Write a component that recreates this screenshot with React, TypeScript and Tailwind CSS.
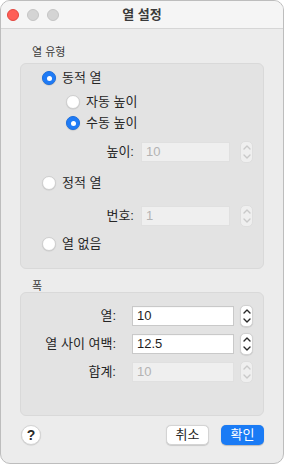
import React from "react";

const FONT = { fontFamily: '"Liberation Sans", "Noto Sans CJK KR", sans-serif' };

function Radio({ checked }: { checked: boolean }) {
  if (checked) {
    return (
      <span className="w-[14px] h-[14px] rounded-full bg-[#1f7bf6] border border-[#1a6fe0] flex items-center justify-center shrink-0 shadow-[0_0.5px_1px_rgba(0,0,0,0.2)]">
        <span className="w-[5px] h-[5px] rounded-full bg-white" />
      </span>
    );
  }
  return (
    <span className="w-[14px] h-[14px] rounded-full bg-white border border-[#cfcfcf] shrink-0 shadow-[0_0.5px_1px_rgba(0,0,0,0.12)]" />
  );
}

function Stepper({ disabled }: { disabled?: boolean }) {
  const c = disabled ? "#c9c9c9" : "#2a2a2a";
  return (
    <span
      className={
        "w-[13px] h-[22px] rounded-[5px] flex flex-col items-center justify-between py-[3px] shrink-0 " +
        (disabled
          ? "bg-[#efefef] border border-[#dedede]"
          : "bg-white border border-[#d2d2d2] shadow-[0_0.5px_1px_rgba(0,0,0,0.15)]")
      }
    >
      <svg width="8" height="5" viewBox="0 0 8 5">
        <path d="M1 4 L4 1 L7 4" fill="none" stroke={c} strokeWidth="1.4" strokeLinecap="round" strokeLinejoin="round" />
      </svg>
      <svg width="8" height="5" viewBox="0 0 8 5">
        <path d="M1 1 L4 4 L7 1" fill="none" stroke={c} strokeWidth="1.4" strokeLinecap="round" strokeLinejoin="round" />
      </svg>
    </span>
  );
}

function Field({ value, disabled, w }: { value: string; disabled?: boolean; w: string }) {
  return (
    <div
      className={
        "h-[20px] flex items-center px-[4px] text-[13px] border " +
        w +
        " " +
        (disabled
          ? "bg-[#efefef] border-[#e0e0e0] text-[#b3b3b3]"
          : "bg-white border-[#c9c9c9] text-[#1e1e1e] shadow-[inset_0_0.5px_0_rgba(0,0,0,0.05)]")
      }
    >
      {value}
    </div>
  );
}

export default function App() {
  return (
    <div className="w-[284px] h-[464px] bg-white" style={FONT}>
      <div className="w-[284px] h-[464px] rounded-[10px] border border-[#bdbdbd] bg-[#ececec] overflow-hidden flex flex-col">
        {/* Title bar */}
        <div className="h-[28px] bg-[#f5f5f5] border-b border-[#d6d6d6] flex items-center relative shrink-0">
          <div className="flex items-center gap-[8px] pl-[6px]">
            <span className="w-[12px] h-[12px] rounded-full bg-[#fe5f57] border border-[#e2463f]" />
            <span className="w-[12px] h-[12px] rounded-full bg-[#d4d4d4] border border-[#c4c4c4]" />
            <span className="w-[12px] h-[12px] rounded-full bg-[#d4d4d4] border border-[#c4c4c4]" />
          </div>
          <div className="absolute inset-0 flex items-center justify-center text-[13px] font-bold text-[#3a3a3a]">
            열 설정
          </div>
        </div>

        <div className="flex flex-col px-[19px]">
          {/* Section 1 label */}
          <div className="text-[11px] text-[#3a3a3a] mt-[17px] pl-[12px] leading-[13px]">열 유형</div>
          <div className="mt-[4px] h-[206px] rounded-[6px] bg-[#e3e3e3] border border-[#d9d9d9] flex flex-col pl-[21px] text-[13px] text-[#262626]">
            <div className="h-[20px] mt-[4px] flex items-center gap-[6px]">
              <Radio checked />
              <span>동적 열</span>
            </div>
            <div className="h-[20px] mt-[4px] flex items-center gap-[6px] pl-[24px]">
              <Radio checked={false} />
              <span>자동 높이</span>
            </div>
            <div className="h-[20px] mt-[1px] flex items-center gap-[6px] pl-[24px]">
              <Radio checked />
              <span>수동 높이</span>
            </div>
            <div className="h-[20px] mt-[9px] flex items-center">
              <span className="w-[92px] text-right">높이:</span>
              <span className="w-[7px]" />
              <Field value="10" disabled w="w-[89px]" />
              <span className="w-[10px]" />
              <Stepper disabled />
            </div>
            <div className="h-[20px] mt-[11px] flex items-center gap-[6px]">
              <Radio checked={false} />
              <span>정적 열</span>
            </div>
            <div className="h-[20px] mt-[13px] flex items-center">
              <span className="w-[92px] text-right">번호:</span>
              <span className="w-[7px]" />
              <Field value="1" disabled w="w-[89px]" />
              <span className="w-[10px]" />
              <Stepper disabled />
            </div>
            <div className="h-[20px] mt-[8px] flex items-center gap-[6px]">
              <Radio checked={false} />
              <span>열 없음</span>
            </div>
          </div>

          {/* Section 2 label */}
          <div className="text-[11px] text-[#3a3a3a] mt-[11px] pl-[12px] leading-[12px]">폭</div>
          <div className="mt-[0px] h-[124px] rounded-[6px] bg-[#e3e3e3] border border-[#d9d9d9] flex flex-col pt-[13px] text-[13px] text-[#262626]">
            <div className="h-[20px] flex items-center">
              <span className="w-[95px] text-right">열:</span>
              <span className="w-[16px]" />
              <Field value="10" w="w-[102px]" />
              <span className="w-[6px]" />
              <Stepper />
            </div>
            <div className="h-[20px] mt-[8px] flex items-center">
              <span className="w-[95px] text-right">열 사이 여백:</span>
              <span className="w-[16px]" />
              <Field value="12.5" w="w-[102px]" />
              <span className="w-[6px]" />
              <Stepper />
            </div>
            <div className="h-[20px] mt-[8px] flex items-center">
              <span className="w-[95px] text-right">합계:</span>
              <span className="w-[16px]" />
              <Field value="10" disabled w="w-[102px]" />
              <span className="w-[6px]" />
              <Stepper disabled />
            </div>
          </div>

          {/* Buttons */}
          <div className="mt-[8px] h-[22px] flex items-center">
            <span className="w-[20px] h-[20px] rounded-full bg-white border border-[#d4d4d4] shadow-[0_0.5px_1px_rgba(0,0,0,0.15)] flex items-center justify-center text-[14px] font-bold text-[#2a2a2a] ml-[1px]">
              ?
            </span>
            <div className="flex-1" />
            <span className="w-[43px] h-[20px] rounded-[5px] bg-white border border-[#d4d4d4] shadow-[0_0.5px_1px_rgba(0,0,0,0.15)] flex items-center justify-center text-[13px] text-[#262626]">
              취소
            </span>
            <span className="w-[12px]" />
            <span className="w-[43px] h-[20px] rounded-[5px] bg-[#1a7bf5] shadow-[0_0.5px_1px_rgba(0,0,0,0.2)] flex items-center justify-center text-[13px] text-white">
              확인
            </span>
          </div>
        </div>
      </div>
    </div>
  );
}
